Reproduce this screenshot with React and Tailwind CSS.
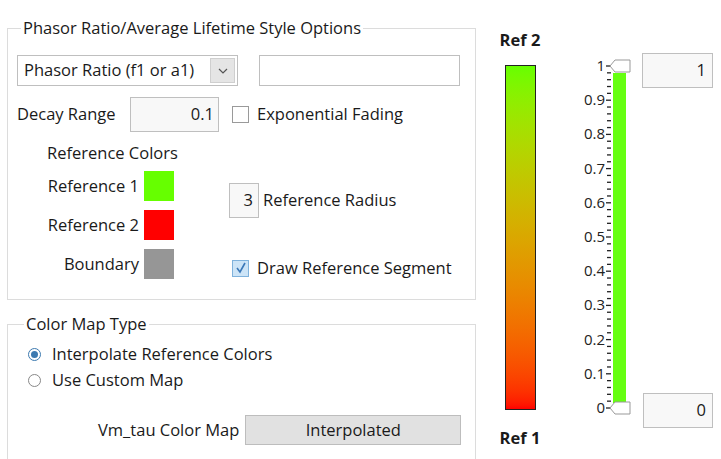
import React from "react";

const F = { fontFamily: '"Open Sans", "Noto Sans", sans-serif' };

function Swatch({ c }) {
  return <div className={`w-[30px] h-[30px] shrink-0 ${c}`} />;
}

function Scale() {
  const top = 66, bot = 408;
  const ticks = [];
  for (let i = 0; i <= 50; i++) {
    const y = top + ((bot - top) * i) / 50;
    ticks.push(<line key={i} x1={i % 5 === 0 ? 56 : 57} x2={61} y1={y} y2={y} stroke="#222" strokeWidth="1.3" />);
  }
  const labels = [];
  for (let i = 0; i <= 10; i++) {
    const y = top + ((bot - top) * i) / 10;
    const v = i === 0 ? "1" : i === 10 ? "0" : "0." + (10 - i);
    labels.push(<text key={i} x={55} y={y + 5} textAnchor="end" fontSize="15" fill="#222" style={F}>{v}</text>);
  }
  const thumb = (y) => `M60 ${y} L65 ${y - 6} L80 ${y - 6} L80 ${y + 6} L65 ${y + 6} Z`;
  return (
    <svg width="85" height="459" className="block">
      {ticks}
      {labels}
      <rect x="63" y="73" width="13" height="330" fill="#66ff11" />
      <path d={thumb(66)} fill="#fff" stroke="#999" />
      <path d={thumb(408)} fill="#fff" stroke="#999" />
    </svg>
  );
}

export default function App() {
  return (
    <div className="w-[721px] h-[459px] bg-white overflow-hidden flex text-[16.5px] text-[#1a1a1a]" style={F}>
      <div className="w-[490px] shrink-0 pl-[7px] pt-[28px]">
        <div className="relative w-[469px] h-[272px] border border-[#dcdcdc] px-[9px] pt-[26px]">
          <span className="absolute left-[13px] top-[-12px] bg-white px-[2px] leading-[22px] whitespace-nowrap">Phasor Ratio/Average Lifetime Style Options</span>
          <div className="flex gap-[21px]">
            <div className="w-[221px] h-[31px] border border-[#bfbfbf] bg-white flex items-center pl-[6px] pr-[2px]">
              <span className="flex-1 whitespace-nowrap">Phasor Ratio (f1 or a1)</span>
              <div className="w-[25px] h-[25px] border border-[#cfcfcf] bg-[#e5e5e5] flex items-center justify-center">
                <svg width="10" height="6"><path d="M1 1 L5 5 L9 1" fill="none" stroke="#555" strokeWidth="1.2" /></svg>
              </div>
            </div>
            <div className="w-[201px] h-[31px] border border-[#bfbfbf]" />
          </div>
          <div className="flex items-center mt-[11px]">
            <span className="w-[113px] whitespace-nowrap">Decay Range</span>
            <div className="w-[89px] h-[35px] border border-[#bfbfbf] bg-[#f8f8f8] flex items-center justify-end pr-[4px]">0.1</div>
            <div className="ml-[13px] w-[17px] h-[17px] border border-[#9a9a9a] bg-white" />
            <span className="ml-[8px] whitespace-nowrap">Exponential Fading</span>
          </div>
          <div className="flex mt-[10px]">
            <div className="w-[212px] pl-[30px]">
              <div className="leading-[22px] whitespace-nowrap">Reference Colors</div>
              <div className="flex flex-col items-end w-[127px] mt-[7px] gap-[9px]">
                <div className="flex items-center gap-[5px] whitespace-nowrap"><span>Reference 1</span><Swatch c="bg-[#66ff00]" /></div>
                <div className="flex items-center gap-[5px] whitespace-nowrap"><span>Reference 2</span><Swatch c="bg-[#ff0000]" /></div>
                <div className="flex items-center gap-[5px] whitespace-nowrap"><span>Boundary</span><Swatch c="bg-[#969696]" /></div>
              </div>
            </div>
            <div className="flex flex-col">
              <div className="flex items-center mt-[41px]">
                <div className="w-[30px] h-[35px] border border-[#bfbfbf] bg-[#f8f8f8] flex items-center justify-end pr-[5px]">3</div>
                <span className="ml-[4px] whitespace-nowrap">Reference Radius</span>
              </div>
              <div className="flex items-center mt-[38px] ml-[3px]">
                <div className="w-[17px] h-[17px] bg-[#cce4f7] border border-[#7fb2dc] flex items-center justify-center">
                  <svg width="12" height="12"><path d="M2 6 L5 10 L10 1" fill="none" stroke="#3b78b8" strokeWidth="1.6" /></svg>
                </div>
                <span className="ml-[8px] whitespace-nowrap">Draw Reference Segment</span>
              </div>
            </div>
          </div>
        </div>
        <div className="relative w-[469px] h-[150px] mt-[24px] border border-[#dcdcdc] pl-[20px] pt-[16px]">
          <span className="absolute left-[16px] top-[-12px] bg-white px-[2px] leading-[22px]">Color Map Type</span>
          <div className="flex items-center gap-[11px] leading-[26px]">
            <div className="w-[13px] h-[13px] rounded-full border border-[#3d7ab0] flex items-center justify-center"><div className="w-[7px] h-[7px] rounded-full bg-[#3d7ab0]" /></div>
            <span>Interpolate Reference Colors</span>
          </div>
          <div className="flex items-center gap-[11px] leading-[26px]">
            <div className="w-[13px] h-[13px] rounded-full border border-[#888] bg-white" />
            <span>Use Custom Map</span>
          </div>
          <div className="flex items-center mt-[22px] ml-[70px]">
            <span className="whitespace-nowrap">Vm_tau Color Map</span>
            <div className="ml-[6px] w-[216px] h-[30px] border border-[#bdbdbd] bg-[#e1e1e1] flex items-center justify-center">Interpolated</div>
          </div>
        </div>
      </div>
      <div className="flex flex-col items-center w-[60px] shrink-0 pt-[28px]">
        <div className="font-bold leading-[24px] whitespace-nowrap">Ref 2</div>
        <div className="mt-[13px] w-[31px] h-[345px] border border-[#222] bg-gradient-to-b from-[#66ff00] to-[#ff0000]" />
        <div className="font-bold leading-[24px] mt-[16px] whitespace-nowrap">Ref 1</div>
      </div>
      <div className="shrink-0"><Scale /></div>
      <div className="flex flex-col shrink-0 pt-[53px] ml-[7px]">
        <div className="w-[71px] h-[35px] border border-[#bfbfbf] bg-[#f8f8f8] flex items-center justify-end pr-[6px]">1</div>
        <div className="w-[70px] h-[35px] ml-[1px] mt-[305px] border border-[#bfbfbf] bg-[#f8f8f8] flex items-center justify-end pr-[6px]">0</div>
      </div>
    </div>
  );
}
